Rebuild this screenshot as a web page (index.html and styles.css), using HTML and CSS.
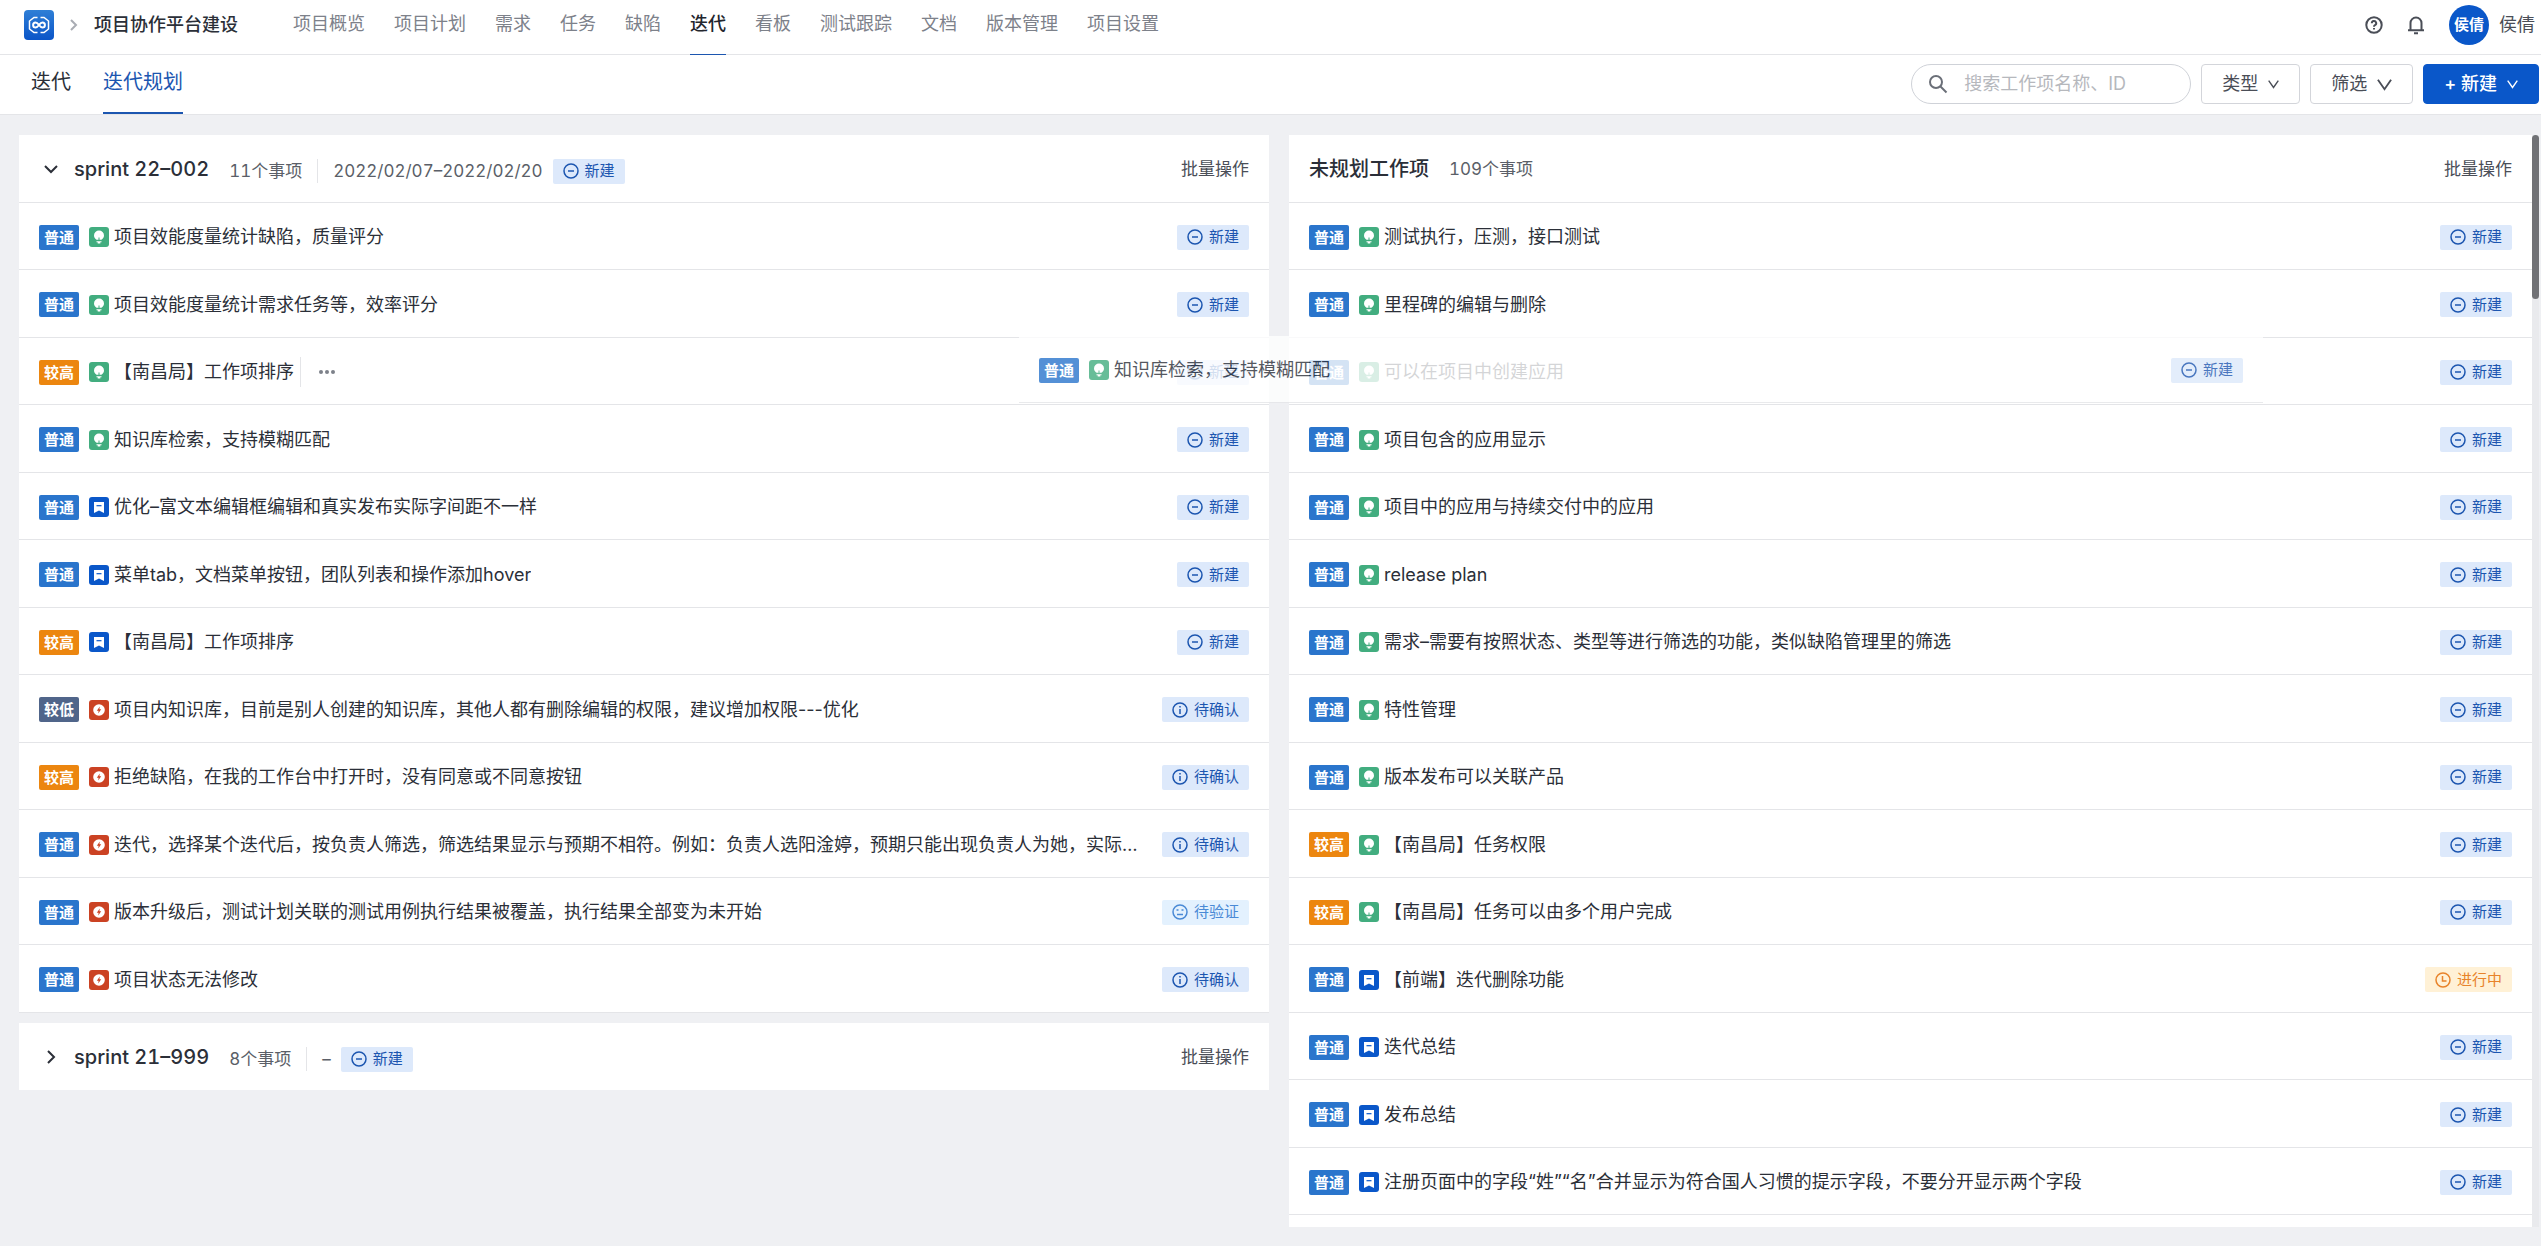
FILE: index.html
```html
<!DOCTYPE html>
<html lang="zh-CN">
<head>
<meta charset="utf-8">
<title>项目协作平台建设 - 迭代规划</title>
<link rel="stylesheet" href="styles.css">
</head>
<body>
<svg class="sprite" aria-hidden="true">
  <symbol id="i-minus" viewBox="0 0 16 16"><circle cx="8" cy="8" r="7"/><path d="M5 8h6"/></symbol>
  <symbol id="i-info" viewBox="0 0 16 16"><circle cx="8" cy="8" r="7"/><path d="M8 7v5M8 4v1.500"/></symbol>
  <symbol id="i-face" viewBox="0 0 16 16"><circle cx="8" cy="8" r="7"/><path d="M4.500 6h2M9.500 6h2M5 10.500h6"/></symbol>
  <symbol id="i-clock" viewBox="0 0 16 16"><circle cx="8" cy="8" r="7"/><path d="M7.500 4v5h4"/></symbol>
  <symbol id="i-down" viewBox="0 0 16 16"><path d="M1 3l7 10 7-10"/></symbol>
  <symbol id="i-idea" viewBox="0 0 20 20"><rect width="20" height="20" rx="3" fill="#42ad7f"/><path fill="#fff" d="M10 3.500a5 5 0 0 0-5 5c0 2.200 1.300 3.300 2.600 4.300h4.800C13.700 11.800 15 10.700 15 8.500a5 5 0 0 0-5-5zM7.500 14.200h5v1h-1.200v1.300H8.700v-1.300H7.500z"/><path d="M10 13.500v-3" stroke="#42ad7f"/></symbol>
  <symbol id="i-task" viewBox="0 0 20 20"><rect width="20" height="20" rx="3" fill="#0a57c9"/><path fill="#fff" d="M5 5h10v11l-5-2.500L5 16z"/><path d="M7.500 8.700h5" stroke="#0a57c9" stroke-width="1.200"/></symbol>
  <symbol id="i-bug" viewBox="0 0 20 20"><rect width="20" height="20" rx="3" fill="#cb4223"/><circle cx="10" cy="10" r="5.800" fill="#fff"/><path fill="#cb4223" d="M10.800 6.500L7.800 10.700h1.800L9.200 13.500l3-4.200h-1.800z"/></symbol>
</svg>

<header class="topbar">
  <a class="logo" href="#" aria-label="首页">
    <svg viewBox="0 0 30 30"><defs><linearGradient id="lg" x2="0" y2="1"><stop stop-color="#2f7fd6"/><stop offset="1" stop-color="#0a55c8"/></linearGradient></defs><rect width="30" height="30" rx="4" fill="url(#lg)"/><g fill="none" stroke="#fff" stroke-width="1.500"><path d="M13.500 7.500H10L5.500 11v8l4.500 3.500h3.500M16.500 7.500H20l4.500 3.500v8L20 22.500h-3.500"/><path stroke-width="2" d="M15 15c-1.500-2-2.300-2.500-3.400-2.500a2.500 2.500 0 0 0 0 5c1.100 0 1.900-.5 3.400-2.500s2.300-2.500 3.400-2.500a2.500 2.500 0 0 1 0 5c-1.100 0-1.900-.5-3.400-2.500z"/></g></svg>
  </a>
  <svg class="crumb" viewBox="0 0 8 14"><path d="M1 2l5 5-5 5"/></svg>
  <strong class="project">项目协作平台建设</strong>
  <nav class="mainnav">
    <a href="#">项目概览</a><a href="#">项目计划</a><a href="#">需求</a><a href="#">任务</a><a href="#">缺陷</a><a href="#" class="on">迭代</a><a href="#">看板</a><a href="#">测试跟踪</a><a href="#">文档</a><a href="#">版本管理</a><a href="#">项目设置</a>
  </nav>
  <div class="user">
    <button class="icon" aria-label="帮助"><svg viewBox="0 0 18 18"><circle cx="9" cy="9" r="7.700"/><path d="M6.800 7.200a2.200 2.200 0 1 1 3.200 2c-.7.400-1 .7-1 1.500M9 12v1.400"/></svg></button>
    <button class="icon" aria-label="通知"><svg viewBox="0 0 18 18"><path d="M3.500 14V7a5.500 5.500 0 0 1 11 0v7M1 14.300h16M7 17.200h4"/></svg></button>
    <span class="avatar">侯倩</span>
    <span>侯倩</span>
  </div>
</header>

<div class="subbar">
  <nav class="tabs"><a href="#">迭代</a><a href="#" class="on">迭代规划</a></nav>
  <div class="tools">
    <label class="search"><svg viewBox="0 0 20 20"><circle cx="8" cy="8" r="6"/><path d="M12.500 12.500l6 6"/></svg><input type="search" placeholder="搜索工作项名称、ID" aria-label="搜索工作项"></label>
    <button class="btn">类型<svg class="caret"><use href="#i-down"/></svg></button>
    <button class="btn">筛选<svg class="caret big"><use href="#i-down"/></svg></button>
    <button class="btn primary">+ 新建<svg class="caret"><use href="#i-down"/></svg></button>
  </div>
</div>

<main class="board">
  <div class="column">
    <section class="panel">
      <header class="head">
        <button class="toggle" aria-label="收起"><svg viewBox="0 0 14 14"><path d="M1 4l6 6 6-6"/></svg></button>
        <h2>sprint 22–002</h2>
        <div class="meta"><span class="count">11个事项</span><span class="dates">2022/02/07–2022/02/20</span><span class="status"><svg><use href="#i-minus"/></svg>新建</span></div>
        <button class="batch">批量操作</button>
      </header>
      <ul class="rows">
        <li><span class="tag">普通</span><svg class="kind"><use href="#i-idea"/></svg><span class="name">项目效能度量统计缺陷，质量评分</span><span class="status"><svg><use href="#i-minus"/></svg>新建</span></li>
        <li><span class="tag">普通</span><svg class="kind"><use href="#i-idea"/></svg><span class="name">项目效能度量统计需求任务等，效率评分</span><span class="status"><svg><use href="#i-minus"/></svg>新建</span></li>
        <li><span class="tag high">较高</span><svg class="kind"><use href="#i-idea"/></svg><span class="name">【南昌局】工作项排序</span><button class="more" aria-label="更多"><svg viewBox="0 0 16 4"><circle cx="2" cy="2" r="2"/><circle cx="8" cy="2" r="2"/><circle cx="14" cy="2" r="2"/></svg></button><span class="status"><svg><use href="#i-minus"/></svg>新建</span></li>
        <li><span class="tag">普通</span><svg class="kind"><use href="#i-idea"/></svg><span class="name">知识库检索，支持模糊匹配</span><span class="status"><svg><use href="#i-minus"/></svg>新建</span></li>
        <li><span class="tag">普通</span><svg class="kind"><use href="#i-task"/></svg><span class="name">优化–富文本编辑框编辑和真实发布实际字间距不一样</span><span class="status"><svg><use href="#i-minus"/></svg>新建</span></li>
        <li><span class="tag">普通</span><svg class="kind"><use href="#i-task"/></svg><span class="name">菜单tab，文档菜单按钮，团队列表和操作添加hover</span><span class="status"><svg><use href="#i-minus"/></svg>新建</span></li>
        <li><span class="tag high">较高</span><svg class="kind"><use href="#i-task"/></svg><span class="name">【南昌局】工作项排序</span><span class="status"><svg><use href="#i-minus"/></svg>新建</span></li>
        <li><span class="tag low">较低</span><svg class="kind"><use href="#i-bug"/></svg><span class="name">项目内知识库，目前是别人创建的知识库，其他人都有删除编辑的权限，建议增加权限---优化</span><span class="status"><svg><use href="#i-info"/></svg>待确认</span></li>
        <li><span class="tag high">较高</span><svg class="kind"><use href="#i-bug"/></svg><span class="name">拒绝缺陷，在我的工作台中打开时，没有同意或不同意按钮</span><span class="status"><svg><use href="#i-info"/></svg>待确认</span></li>
        <li><span class="tag">普通</span><svg class="kind"><use href="#i-bug"/></svg><span class="name">迭代，选择某个迭代后，按负责人筛选，筛选结果显示与预期不相符。例如：负责人选阳淦婷，预期只能出现负责人为她，实际…</span><span class="status"><svg><use href="#i-info"/></svg>待确认</span></li>
        <li><span class="tag">普通</span><svg class="kind"><use href="#i-bug"/></svg><span class="name">版本升级后，测试计划关联的测试用例执行结果被覆盖，执行结果全部变为未开始</span><span class="status verify"><svg><use href="#i-face"/></svg>待验证</span></li>
        <li><span class="tag">普通</span><svg class="kind"><use href="#i-bug"/></svg><span class="name">项目状态无法修改</span><span class="status"><svg><use href="#i-info"/></svg>待确认</span></li>
      </ul>
    </section>
    <section class="panel">
      <header class="head">
        <button class="toggle" aria-label="展开"><svg viewBox="0 0 14 14"><path d="M4 1l6 6-6 6"/></svg></button>
        <h2>sprint 21–999</h2>
        <div class="meta"><span class="count">8个事项</span><span class="dates">–</span><span class="status"><svg><use href="#i-minus"/></svg>新建</span></div>
        <button class="batch">批量操作</button>
      </header>
    </section>
  </div>

  <div class="column backlog">
    <section class="panel">
      <header class="head">
        <h2>未规划工作项</h2>
        <span class="total">109个事项</span>
        <button class="batch">批量操作</button>
      </header>
      <ul class="rows">
        <li><span class="tag">普通</span><svg class="kind"><use href="#i-idea"/></svg><span class="name">测试执行，压测，接口测试</span><span class="status"><svg><use href="#i-minus"/></svg>新建</span></li>
        <li><span class="tag">普通</span><svg class="kind"><use href="#i-idea"/></svg><span class="name">里程碑的编辑与删除</span><span class="status"><svg><use href="#i-minus"/></svg>新建</span></li>
        <li><span class="tag">普通</span><svg class="kind"><use href="#i-idea"/></svg><span class="name">可以在项目中创建应用</span><span class="status"><svg><use href="#i-minus"/></svg>新建</span></li>
        <li><span class="tag">普通</span><svg class="kind"><use href="#i-idea"/></svg><span class="name">项目包含的应用显示</span><span class="status"><svg><use href="#i-minus"/></svg>新建</span></li>
        <li><span class="tag">普通</span><svg class="kind"><use href="#i-idea"/></svg><span class="name">项目中的应用与持续交付中的应用</span><span class="status"><svg><use href="#i-minus"/></svg>新建</span></li>
        <li><span class="tag">普通</span><svg class="kind"><use href="#i-idea"/></svg><span class="name">release plan</span><span class="status"><svg><use href="#i-minus"/></svg>新建</span></li>
        <li><span class="tag">普通</span><svg class="kind"><use href="#i-idea"/></svg><span class="name">需求–需要有按照状态、类型等进行筛选的功能，类似缺陷管理里的筛选</span><span class="status"><svg><use href="#i-minus"/></svg>新建</span></li>
        <li><span class="tag">普通</span><svg class="kind"><use href="#i-idea"/></svg><span class="name">特性管理</span><span class="status"><svg><use href="#i-minus"/></svg>新建</span></li>
        <li><span class="tag">普通</span><svg class="kind"><use href="#i-idea"/></svg><span class="name">版本发布可以关联产品</span><span class="status"><svg><use href="#i-minus"/></svg>新建</span></li>
        <li><span class="tag high">较高</span><svg class="kind"><use href="#i-idea"/></svg><span class="name">【南昌局】任务权限</span><span class="status"><svg><use href="#i-minus"/></svg>新建</span></li>
        <li><span class="tag high">较高</span><svg class="kind"><use href="#i-idea"/></svg><span class="name">【南昌局】任务可以由多个用户完成</span><span class="status"><svg><use href="#i-minus"/></svg>新建</span></li>
        <li><span class="tag">普通</span><svg class="kind"><use href="#i-task"/></svg><span class="name">【前端】迭代删除功能</span><span class="status doing"><svg><use href="#i-clock"/></svg>进行中</span></li>
        <li><span class="tag">普通</span><svg class="kind"><use href="#i-task"/></svg><span class="name">迭代总结</span><span class="status"><svg><use href="#i-minus"/></svg>新建</span></li>
        <li><span class="tag">普通</span><svg class="kind"><use href="#i-task"/></svg><span class="name">发布总结</span><span class="status"><svg><use href="#i-minus"/></svg>新建</span></li>
        <li><span class="tag">普通</span><svg class="kind"><use href="#i-task"/></svg><span class="name">注册页面中的字段“姓”“名”合并显示为符合国人习惯的提示字段，不要分开显示两个字段</span><span class="status"><svg><use href="#i-minus"/></svg>新建</span></li>
      </ul>
    </section>
    <div class="track"><div class="thumb"></div></div>
  </div>

  <div class="dragged row"><span class="tag">普通</span><svg class="kind"><use href="#i-idea"/></svg><span class="name">知识库检索，支持模糊匹配</span><span class="status"><svg><use href="#i-minus"/></svg>新建</span></div>
</main>
</body>
</html>
```
FILE: styles.css
```css
* { box-sizing: border-box; }

body {
  margin: 0;
  height: 100vh;
  display: flex;
  flex-direction: column;
  overflow: hidden;
  background: #eff0f3;
  color: #2b2f38;
  font: 18px/24px Inter, "Noto Sans CJK SC", sans-serif;
}

a { color: inherit; text-decoration: none; }
button { font: inherit; color: inherit; background: none; border: 0; padding: 0; white-space: nowrap; }
svg { fill: none; stroke: currentColor; flex: none; }
h2 { margin: 0; font-size: 20px; line-height: 28px; font-weight: 500; white-space: nowrap; }
.sprite { position: absolute; width: 0; height: 0; }

/* top navigation */
.topbar {
  flex: none;
  height: 55px;
  display: flex;
  align-items: flex-start;
  padding: 0 6px 0 24px;
  background: #fff;
  border-bottom: 1px solid #e4e5e8;
}
.logo { height: 50px; display: flex; align-items: center; }
.logo svg { width: 30px; height: 30px; stroke: none; }
.crumb { width: 8px; height: 50px; margin: 0 16px; stroke: #a9acb3; stroke-width: 2; }
.project { line-height: 50px; font-weight: 500; white-space: nowrap; }
.mainnav { display: flex; gap: 29px; margin-left: 55px; color: #7d818a; white-space: nowrap; }
.mainnav a { height: 56px; line-height: 48px; }
.mainnav .on { color: #23262d; font-weight: 500; border-bottom: 2px solid #1c56b0; }
.user { margin-left: auto; height: 50px; display: flex; align-items: center; color: #4a4e57; white-space: nowrap; }
.icon { display: flex; margin-right: 24px; }
.icon svg { width: 18px; height: 20px; stroke-width: 2; }
.avatar {
  width: 40px;
  height: 40px;
  margin-right: 10px;
  border-radius: 50%;
  background: #0a57c9;
  color: #fff;
  font-size: 15px;
  font-weight: 600;
  line-height: 40px;
  text-align: center;
}

/* secondary bar */
.subbar {
  flex: none;
  height: 60px;
  display: flex;
  justify-content: space-between;
  padding: 0 2px 0 31px;
  background: #fff;
  border-bottom: 1px solid #e4e5e8;
}
.tabs { display: flex; gap: 32px; font-size: 20px; line-height: 54px; white-space: nowrap; }
.tabs .on { color: #1c56b0; border-bottom: 2px solid #1c56b0; }
.tools { display: flex; align-items: center; gap: 10px; height: 58px; }
.search {
  width: 280px;
  height: 40px;
  display: flex;
  align-items: center;
  gap: 16px;
  padding: 0 16px;
  border: 1px solid #cfd2d8;
  border-radius: 20px;
  color: #6b6f78;
}
.search svg { width: 20px; height: 20px; stroke-width: 2; }
.search input { flex: 1; min-width: 0; border: 0; outline: 0; padding: 0; background: none; font: inherit; }
.search input::placeholder { color: #b6b8bd; opacity: 1; }
.btn {
  height: 40px;
  display: flex;
  align-items: center;
  gap: 10px;
  padding: 0 20px;
  border: 1px solid #d3d5da;
  border-radius: 4px;
  color: #4a4e57;
}
.caret { width: 11px; height: 12px; stroke-width: 2; }
.caret.big { width: 15px; height: 15px; }
.btn.primary { border-color: #0a57c9; background: #0a57c9; color: #fff; font-weight: 500; }

/* planning board */
.board {
  position: relative;
  flex: 1;
  min-height: 0;
  display: grid;
  grid-template-columns: 1fr 1fr;
  gap: 20px;
  padding: 20px 2px 19px 19px;
}
.column { min-width: 0; min-height: 0; display: flex; flex-direction: column; gap: 10px; }
.backlog { flex-direction: row; gap: 0; }
.backlog .panel { flex: 1; min-width: 0; overflow-y: auto; scrollbar-width: none; }
.panel { background: #fff; }
.track { width: 7px; background: #e9eaed; }
.thumb { height: 15%; border-radius: 4px; background: #717276; }

.head { height: 67px; display: flex; align-items: center; padding: 0 20px; font-variant-numeric: tabular-nums; }
.head:has(+ .rows) { height: 68px; border-bottom: 1px solid #e4e5e8; }
.toggle { width: 35px; display: flex; padding-left: 5px; }
.toggle svg { width: 14px; height: 14px; stroke-width: 2; }
.meta { display: flex; align-items: center; margin: 5px 0 0 20px; color: #5b5f68; font-size: 17px; white-space: nowrap; }
.dates { margin: 0 10px 0 15px; padding-left: 15px; border-left: 1px solid #e4e5e8; }
.total { margin-left: 20px; color: #5b5f68; font-size: 17px; }
.batch { margin-left: auto; color: #4a4e57; font-size: 17px; }

.rows { list-style: none; margin: 0; padding: 0; display: grid; grid-auto-rows: 67px 68px; }
.rows li, .row { min-width: 0; display: flex; align-items: center; padding: 2px 20px 0; border-bottom: 1px solid #e4e5e8; }
.tag {
  flex: none;
  width: 40px;
  height: 25px;
  margin-right: 10px;
  border-radius: 2px;
  background: #2a75cc;
  color: #fff;
  font-size: 15px;
  font-weight: 600;
  line-height: 25px;
  text-align: center;
}
.tag.high { background: #ec860f; }
.tag.low { background: #50658a; }
.kind { width: 20px; height: 20px; margin-right: 5px; stroke: none; }
.name { min-width: 0; overflow: hidden; text-overflow: ellipsis; white-space: nowrap; }
.more { margin-left: 6px; height: 30px; padding-left: 18px; border-left: 1px solid #e4e5e8; display: flex; align-items: center; }
.more svg { width: 16px; height: 4px; fill: #7d818a; stroke: none; }
.status {
  flex: none;
  height: 25px;
  display: flex;
  align-items: center;
  gap: 6px;
  padding: 0 10px;
  border-radius: 2px;
  background: #dde9fb;
  color: #1c56b0;
  font-size: 15px;
}
.status svg { width: 16px; height: 16px; stroke-width: 1.5; }
.rows .status, .row .status { margin-left: auto; }
.status.verify { background: #e3f1fe; color: #4a8ad6; }
.status.doing { background: #fff1d6; color: #e8832a; }

/* row carried by the pointer */
.dragged {
  position: absolute;
  left: 1019px;
  top: 221px;
  width: 1244px;
  height: 67px;
  background: #fff;
  opacity: 0.8;
}
```
